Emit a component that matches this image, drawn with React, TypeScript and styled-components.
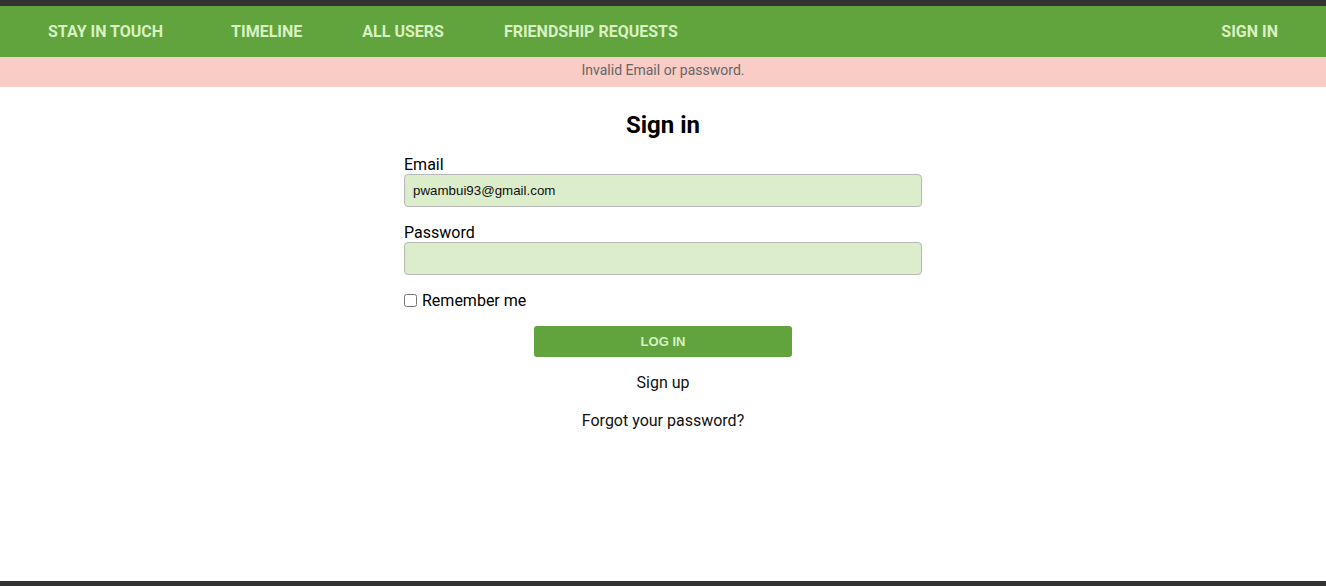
import React from "react";
import styled, { createGlobalStyle } from "styled-components";

const GlobalStyle = createGlobalStyle`
  html, body { margin: 0; padding: 0; }
  body { font-family: Roboto, "Liberation Sans", sans-serif; background: #fff; color: #111; }
  * { box-sizing: border-box; }
`;

const Page = styled.div`
  min-height: 100vh;
  display: flex;
  flex-direction: column;
  border-top: 6px solid #333;
  border-bottom: 5px solid #333;
`;

const NavBar = styled.nav`
  height: 51px;
  background: #61a33c;
  display: flex;
  align-items: center;
  padding: 0 48px;
`;

const NavLink = styled.a<{ $brand?: boolean }>`
  font-family: Roboto, "Liberation Sans", sans-serif;
  font-weight: 700;
  font-size: 16px;
  color: #d8f1c3;
  text-decoration: none;
  text-transform: uppercase;
  margin-right: ${(p) => (p.$brand ? "68px" : "60px")};
`;

const Spacer = styled.div`
  flex: 1;
`;

const RightLink = styled(NavLink)`
  margin-right: 0;
`;

const Alert = styled.div`
  height: 30px;
  padding-bottom: 4px;
  background: #f9ccc5;
  color: #666;
  font-size: 14px;
  display: flex;
  align-items: center;
  justify-content: center;
`;

const Main = styled.main`
  flex: 1;
  display: flex;
  flex-direction: column;
  align-items: center;
  padding-top: 24px;
`;

const Title = styled.h2`
  margin: 0;
  font-size: 24px;
  line-height: 28px;
  font-weight: 700;
  color: #000;
`;

const Form = styled.form`
  width: 518px;
  display: flex;
  flex-direction: column;
  margin-top: 16px;
`;

const Field = styled.div`
  display: flex;
  flex-direction: column;
  margin-bottom: 16px;
`;

const Label = styled.label`
  font-size: 16px;
  line-height: 19px;
  color: #000;
`;

const Input = styled.input`
  height: 33px;
  width: 100%;
  background: #dbedca;
  border: 1px solid #b8b8b8;
  border-radius: 4px;
  padding: 0 8px;
  font-family: Arial, "Liberation Sans", sans-serif;
  font-size: 13.333px;
  color: #111;
  outline: none;
`;

const CheckRow = styled.label`
  display: flex;
  align-items: center;
  font-size: 16px;
  line-height: 19px;
  color: #000;
  margin-bottom: 16px;
`;

const Check = styled.input`
  margin: 0 5px 0 0;
  width: 13px;
  height: 13px;
`;

const SubmitButton = styled.button`
  align-self: center;
  width: 258px;
  height: 31px;
  border: none;
  border-radius: 3px;
  background: #61a33c;
  color: #d8f1c3;
  font-family: Arial, "Liberation Sans", sans-serif;
  font-weight: 700;
  font-size: 13px;
  text-transform: uppercase;
  margin-bottom: 16px;
`;

const TextLink = styled.a<{ $gap?: number }>`
  align-self: center;
  font-size: 16px;
  line-height: 19px;
  color: #111;
  text-decoration: none;
  margin-bottom: ${(p) => p.$gap ?? 0}px;
`;

export default function App() {
  return (
    <>
      <GlobalStyle />
      <Page>
        <NavBar>
          <NavLink $brand href="#">Stay in touch</NavLink>
          <NavLink href="#">Timeline</NavLink>
          <NavLink href="#">All users</NavLink>
          <NavLink href="#">Friendship requests</NavLink>
          <Spacer />
          <RightLink href="#">Sign in</RightLink>
        </NavBar>
        <Alert>Invalid Email or password.</Alert>
        <Main>
          <Title>Sign in</Title>
          <Form onSubmit={(e) => e.preventDefault()}>
            <Field>
              <Label htmlFor="email">Email</Label>
              <Input id="email" type="email" defaultValue="pwambui93@gmail.com" />
            </Field>
            <Field>
              <Label htmlFor="password">Password</Label>
              <Input id="password" type="password" />
            </Field>
            <CheckRow>
              <Check type="checkbox" />
              Remember me
            </CheckRow>
            <SubmitButton type="submit">Log in</SubmitButton>
            <TextLink href="#" $gap={19}>Sign up</TextLink>
            <TextLink href="#">Forgot your password?</TextLink>
          </Form>
        </Main>
      </Page>
    </>
  );
}
